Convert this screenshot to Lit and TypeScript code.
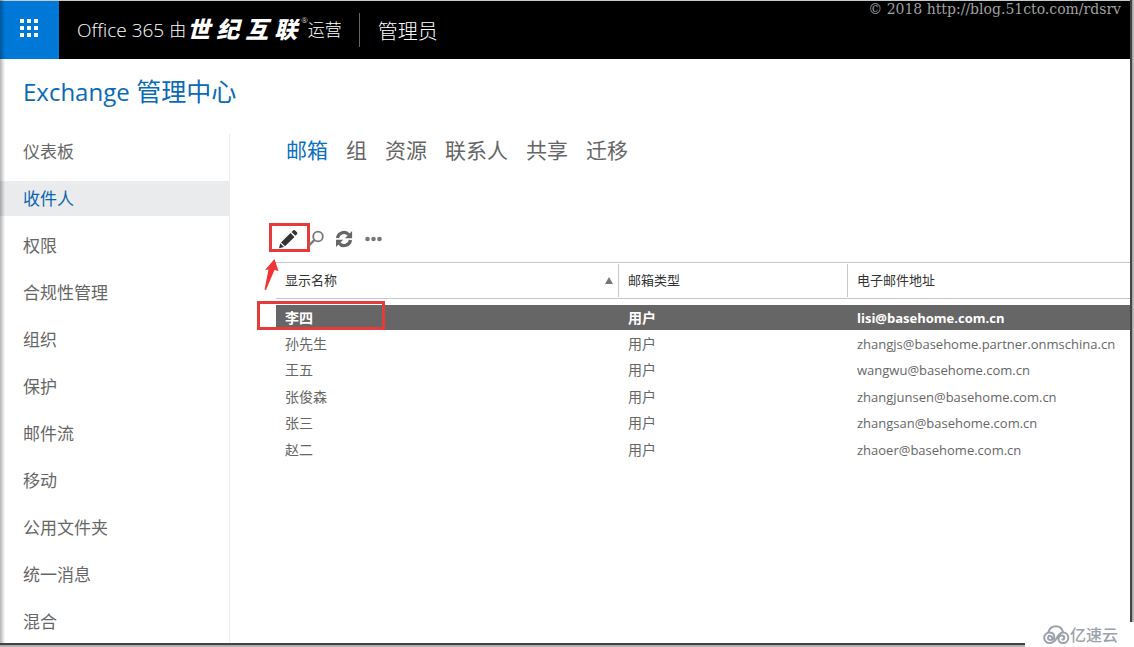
import { LitElement, html, css, svg } from "lit";
import { customElement, property, state } from "lit/decorators.js";
import { classMap } from "lit/directives/class-map.js";

interface Mailbox {
  name: string;
  type: string;
  email: string;
}

@customElement("suite-header")
class SuiteHeader extends LitElement {
  static styles = css`
    :host {
      display: block;
    }
    .bar {
      display: flex;
      align-items: stretch;
      height: 58px;
      border-top: 1px solid #c3ccc8;
      background: #000;
      color: #fff;
      position: relative;
    }
    .launcher {
      width: 59px;
      border: 0;
      padding: 0 2px 4px 0;
      background: #0078d7;
      display: flex;
      align-items: center;
      justify-content: center;
    }
    .brand {
      display: flex;
      align-items: center;
      padding: 0 17px 0 18px;
      font-size: 20px;
      line-height: 24px;
      font-weight: 300;
    }
    .latin {
      font-family: "Open Sans", "Noto Sans", sans-serif;
      font-size: 19px;
    }
    .cjk {
      font-size: 17px;
      padding-left: 5px;
    }
    .partner {
      display: flex;
      gap: 6px;
      font-size: 23px;
      font-weight: 900;
      font-style: italic;
      padding: 0 4px 2px 1px;
    }
    .mark {
      font-size: 8px;
      align-self: flex-start;
      padding-top: 13px;
      line-height: 12px;
    }
    .run {
      font-size: 17px;
    }
    .section {
      align-self: center;
      display: flex;
      align-items: center;
      height: 34px;
      border-left: 1px solid #666;
      padding-left: 18px;
      font-size: 20px;
      font-weight: 300;
    }
    .copyright {
      position: absolute;
      top: 0;
      right: 9px;
      font: 14px/16px "DejaVu Serif", serif;
      color: #a0a0a0;
    }
  `;

  render() {
    const dots = [0, 7, 14].flatMap((y) => [0, 7, 14].map((x) => svg`<rect x=${x} y=${y} width="4" height="4" />`));
    return html`
      <header class="bar">
        <button class="launcher" aria-label="应用启动器">
          <svg width="18" height="18" fill="#fff">${dots}</svg>
        </button>
        <div class="brand">
          <span class="latin">Office 365</span>
          <span class="cjk">由</span>
          <span class="partner"><span>世</span><span>纪</span><span>互</span><span>联</span></span>
          <span class="mark">®</span>
          <span class="run">运营</span>
        </div>
        <div class="section">管理员</div>
        <span class="copyright">© 2018 http://blog.51cto.com/rdsrv</span>
      </header>
    `;
  }
}

@customElement("side-nav")
class SideNav extends LitElement {
  @property({ attribute: false }) items: string[] = [];
  @property() selected = "";

  static styles = css`
    :host {
      display: block;
      border-right: 1px solid #ebebeb;
    }
    .list {
      display: flex;
      flex-direction: column;
      gap: 12px;
    }
    .item {
      display: block;
      padding: 0 23px;
      font-size: 17px;
      line-height: 35px;
      color: #666;
      text-decoration: none;
    }
    .item.on {
      background: #eaebec;
      color: #0a64ad;
    }
  `;

  render() {
    return html`
      <nav class="list">
        ${this.items.map(
          (item) => html`<a href="#" class=${classMap({ item: true, on: item === this.selected })}>${item}</a>`
        )}
      </nav>
    `;
  }
}

@customElement("mailbox-list")
class MailboxList extends LitElement {
  @property({ attribute: false }) rows: Mailbox[] = [];
  @state() private active = 0;

  static styles = css`
    :host {
      display: block;
    }
    .toolbar {
      display: flex;
      align-items: center;
      height: 32px;
      gap: 7px;
      padding-bottom: 7px;
    }
    .tool {
      display: flex;
      align-items: center;
      justify-content: center;
      position: relative;
      width: 22px;
      height: 24px;
      padding: 0;
      border: 0;
      background: none;
    }
    .callout {
      position: absolute;
      border: 3px solid #e53b3b;
      box-sizing: border-box;
      pointer-events: none;
    }
    .callout.edit {
      left: -7px;
      top: -4px;
      width: 41px;
      height: 29px;
    }
    .callout.row {
      left: -19px;
      top: -4px;
      width: 128px;
      height: 29px;
    }
    .arrow {
      position: absolute;
      left: -14px;
      top: 31px;
      pointer-events: none;
    }
    .table {
      width: 100%;
      border-collapse: separate;
      border-spacing: 0;
      table-layout: fixed;
      text-align: left;
    }
    .name {
      width: 342px;
    }
    .type {
      width: 229px;
    }
    .head {
      box-sizing: border-box;
      height: 37px;
      padding: 1px 0;
      border-top: 1px solid #c8c8c8;
      border-bottom: 1px solid #c8c8c8;
      font-size: 13px;
      font-weight: 400;
      color: #333;
    }
    .label {
      display: flex;
      align-items: center;
      justify-content: space-between;
      box-sizing: border-box;
      height: 33px;
      padding: 0 5px 2px 9px;
    }
    .sort {
      padding-top: 2px;
    }
    .head + .head .label {
      border-left: 1px solid #c8c8c8;
    }
    .spacer td {
      height: 6px;
      padding: 0;
    }
    .cell {
      height: 27px;
      padding: 0 0 0 9px;
      position: relative;
      font-size: 14px;
      line-height: 20px;
      color: #666;
      white-space: nowrap;
    }
    tr:nth-child(even) .cell {
      height: 26px;
    }
    .cell + .cell {
      padding-left: 10px;
    }
    .cell.mail {
      font-size: 13px;
    }
    tr.on .cell {
      height: 25px;
      background: #666;
      color: #fff;
      font-weight: 700;
    }
  `;

  render() {
    return html`
      <div class="toolbar">
        <button class="tool" aria-label="编辑">
          <svg width="22" height="22" viewBox="0 0 22 22" fill="#333">
            <path d="M3 20.300l1.300-5 3.700 3.600z" />
            <path d="M5 14.400L14.500 4.900l4 4-9.500 9.400z" />
            <path d="M15.500 3.900l1.900-1.700q.8-.6 1.500 0l2.200 2.200q.6.800 0 1.500l-1.700 1.900z" />
          </svg>
          <span class="callout edit"></span>
          <svg class="arrow" width="18" height="38" viewBox="0 0 18 38" fill="#f0353a">
            <path d="M12.500 1L16.500 13l-4-1L4 32 2.500 31.500 6.500 11.500 3 12z" />
          </svg>
        </button>
        <button class="tool" aria-label="搜索">
          <svg width="18" height="18" viewBox="0 0 18 18" fill="none" stroke="#777">
            <circle cx="11" cy="6.500" r="4.800" stroke-width="1.800" />
            <path d="M7.400 10L2 15.500" stroke-width="2.400" />
          </svg>
        </button>
        <button class="tool" aria-label="刷新">
          <svg width="18" height="18" viewBox="0 0 18 18">
            <path d="M1.500 8A6.500 6.500 0 0 1 12.800 4.600M14.500 10A6.500 6.500 0 0 1 3.200 13.400" fill="none" stroke="#666" stroke-width="3.200" />
            <path d="M16.100 1v7.200H8.900zM0 17V9.800h7.200z" fill="#666" />
          </svg>
        </button>
        <button class="tool" aria-label="更多">
          <svg width="18" height="6" fill="#777">
            <circle cx="2.500" cy="3" r="2.300" />
            <circle cx="8.500" cy="3" r="2.300" />
            <circle cx="14.500" cy="3" r="2.300" />
          </svg>
        </button>
      </div>
      <table class="table">
        <thead>
          <tr>
            <th class="head name" scope="col">
              <div class="label">
                显示名称
                <svg class="sort" width="8" height="7"><path d="M4 0L8 7H0z" fill="#777" /></svg>
              </div>
            </th>
            <th class="head type" scope="col"><div class="label">邮箱类型</div></th>
            <th class="head" scope="col"><div class="label">电子邮件地址</div></th>
          </tr>
        </thead>
        <tbody>
          <tr class="spacer"><td colspan="3"></td></tr>
          ${this.rows.map(
            (row, i) => html`
              <tr class=${classMap({ on: i === this.active })} @click=${() => (this.active = i)}>
                <td class="cell">${row.name}${i === 0 ? html`<span class="callout row"></span>` : null}</td>
                <td class="cell">${row.type}</td>
                <td class="cell mail">${row.email}</td>
              </tr>
            `
          )}
        </tbody>
      </table>
    `;
  }
}

@customElement("app-root")
class AppRoot extends LitElement {
  private nav = ["仪表板", "收件人", "权限", "合规性管理", "组织", "保护", "邮件流", "移动", "公用文件夹", "统一消息", "混合"];
  private tabs = ["邮箱", "组", "资源", "联系人", "共享", "迁移"];
  private rows: Mailbox[] = [
    { name: "李四", type: "用户", email: "lisi@basehome.com.cn" },
    { name: "孙先生", type: "用户", email: "zhangjs@basehome.partner.onmschina.cn" },
    { name: "王五", type: "用户", email: "wangwu@basehome.com.cn" },
    { name: "张俊森", type: "用户", email: "zhangjunsen@basehome.com.cn" },
    { name: "张三", type: "用户", email: "zhangsan@basehome.com.cn" },
    { name: "赵二", type: "用户", email: "zhaoer@basehome.com.cn" },
  ];

  static styles = css`
    :host {
      display: block;
      position: relative;
      box-sizing: border-box;
      min-height: 100vh;
      padding: 0 4px 4px 0;
      background: #bbb;
      font-family: "Open Sans", "Noto Sans CJK SC", sans-serif;
    }
    .window {
      display: flex;
      flex-direction: column;
      box-sizing: border-box;
      min-height: calc(100vh - 4px);
      background: #fff;
      box-shadow: 1px 1px 1px 1px #444;
    }
    .window::before {
      content: "";
      position: absolute;
      left: 0;
      top: 0;
      bottom: 4px;
      width: 5px;
      background: linear-gradient(to right, rgba(0, 0, 0, 0.3), rgba(0, 0, 0, 0));
      z-index: 1;
    }
    .title {
      margin: 0;
      padding: 14px 23px 24px;
      font-size: 25px;
      line-height: 36px;
      font-weight: 400;
      color: #0a6ab6;
    }
    .latin {
      font-size: 24px;
    }
    .body {
      flex: 1;
      display: grid;
      grid-template-columns: 230px minmax(0, 1fr);
    }
    .main {
      padding-left: 46px;
    }
    .tabs {
      display: flex;
      gap: 18px;
      padding: 0 0 57px 10px;
      font-size: 21px;
      line-height: 32px;
    }
    .tab {
      color: #666;
      text-decoration: none;
    }
    .tab.on {
      color: #0a70c0;
    }
    .badge {
      position: absolute;
      right: 0;
      bottom: 0;
      z-index: 2;
      display: flex;
      align-items: center;
      box-sizing: border-box;
      width: 109px;
      height: 25px;
      padding-left: 18px;
      background: #fff;
      color: #9aa2ad;
      font-size: 16px;
      line-height: 24px;
      font-weight: 500;
    }
  `;

  render() {
    return html`
      <div class="window">
        <suite-header></suite-header>
        <h1 class="title"><span class="latin">Exchange</span> 管理中心</h1>
        <div class="body">
          <side-nav .items=${this.nav} selected="收件人"></side-nav>
          <main class="main">
            <nav class="tabs">
              ${this.tabs.map((tab, i) => html`<a href="#" class=${classMap({ tab: true, on: i === 0 })}>${tab}</a>`)}
            </nav>
            <mailbox-list .rows=${this.rows}></mailbox-list>
          </main>
        </div>
      </div>
      <div class="badge">
        <svg width="27" height="20" viewBox="0 0 27 20" fill="none" stroke="#9aa2ad" stroke-width="2" stroke-linecap="round">
          <path d="M5.500 7C6.500 3.500 9.500 1.300 13 1.300S19 3.500 20 7" />
          <path d="M9 13.200a2 2 0 1 0-2.500 1.600C9.500 15.500 11.500 13.800 11.300 11.500 11 9 9 7.500 6.500 7.500 3.500 7.500 1.200 10 1.200 12.800S3.500 18 6.500 18C10 18 12 16 13.500 13.500S16.500 7.500 20 7.500c3 0 5.300 2.300 5.300 5.200S23 18 20 18c-2.800 0-4.500-2-4.500-4.300 0-2 1.500-3.200 3.200-3.200s2.600 1 2.600 2.300-1 1.900-2 1.700" />
        </svg>
        亿速云
      </div>
    `;
  }
}
